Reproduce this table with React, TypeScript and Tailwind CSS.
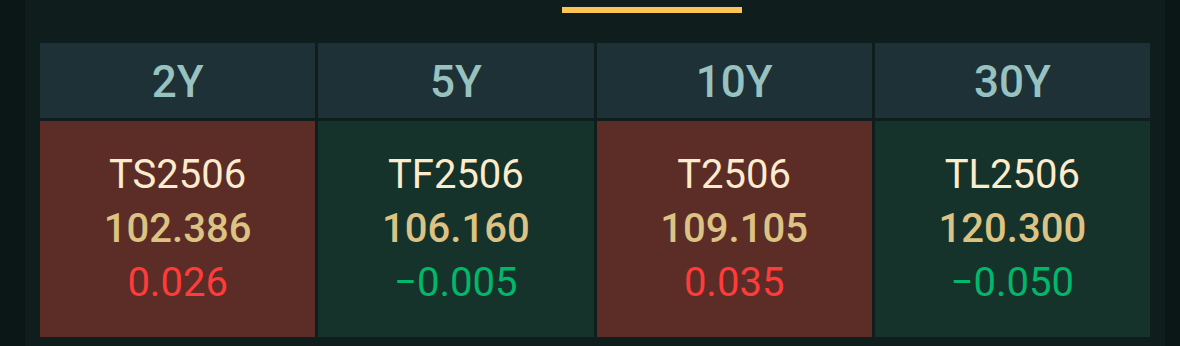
const contracts = [
  { tenor: "2Y", code: "TS2506", price: "102.386", change: "0.026", up: true },
  { tenor: "5Y", code: "TF2506", price: "106.160", change: "−0.005", up: false },
  { tenor: "10Y", code: "T2506", price: "109.105", change: "0.035", up: true },
  { tenor: "30Y", code: "TL2506", price: "120.300", change: "−0.050", up: false },
]

export default function App() {
  return (
    <div className="flex h-[346px] w-[1180px] bg-[#0a1716] font-['Roboto',sans-serif]">
      <div className="ml-[25px] flex w-[1140px] flex-col bg-[#0f1d1d] px-[15px]">
        {/* active tab indicator */}
        <div className="flex h-[43px] pl-[522px] pt-[7px]">
          <div className="h-[6px] w-[180px] bg-[#fbc454]" />
        </div>

        <div className="grid grid-cols-4 gap-[3px]">
          {contracts.map((c) => (
            <div
              key={c.tenor}
              className="flex h-[75px] items-center justify-center bg-[#1e3137] pt-[3px] text-[44px] font-medium text-[#98c2c0]"
            >
              {c.tenor}
            </div>
          ))}
          {contracts.map((c) => (
            <div
              key={c.code}
              className={`flex h-[216px] flex-col items-center justify-center text-[40px] leading-[54px] ${
                c.up ? "bg-[#5c2d27]" : "bg-[#15332a]"
              }`}
            >
              <span className="text-[#fdebcd]">{c.code}</span>
              <span className="font-medium text-[#dcc283]">{c.price}</span>
              <span className={c.up ? "text-[#ff3b3b]" : "text-[#00b86b]"}>{c.change}</span>
            </div>
          ))}
        </div>
      </div>
    </div>
  )
}
